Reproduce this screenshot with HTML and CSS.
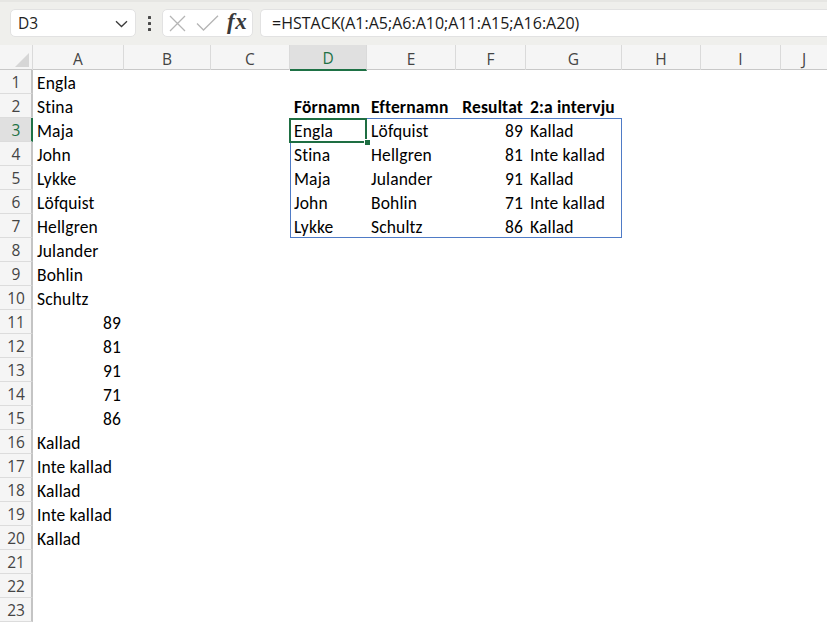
FILE: index.html
```html
<!DOCTYPE html>
<html>
<head>
<meta charset="utf-8">
<link rel="stylesheet" href="styles.css">
</head>
<body>
<div class="app">
  <div class="toolbar">
    <div class="namebox">
      <span class="nb-text">D3</span>
      <svg class="chev" width="13" height="8" viewBox="0 0 13 8"><path d="M1 1.2 L6.5 6.5 L12 1.2" fill="none" stroke="#3a3a3a" stroke-width="1.3"/></svg>
    </div>
    <div class="dots"><span></span><span></span><span></span></div>
    <div class="fxbox">
      <svg class="ic-x" width="17" height="17" viewBox="0 0 17 17"><path d="M1 1 L16 16 M16 1 L1 16" stroke="#b5b5b5" stroke-width="1.3" fill="none"/></svg>
      <svg class="ic-ok" width="23" height="16" viewBox="0 0 23 16"><path d="M1 8.5 L7.5 15 L22 0.8" stroke="#b5b5b5" stroke-width="1.3" fill="none"/></svg>
      <span class="fx">fx</span>
    </div>
    <div class="formula">=HSTACK(A1:A5;A6:A10;A11:A15;A16:A20)</div>
  </div>

  <div class="sheet">
    <div class="row head">
      <div class="corner"><span class="tri"></span></div>
      <div class="ch">A</div><div class="ch">B</div><div class="ch">C</div>
      <div class="ch sel">D</div><div class="ch">E</div><div class="ch">F</div>
      <div class="ch">G</div><div class="ch">H</div><div class="ch">I</div><div class="ch last">J</div>
    </div>
    <div class="row"><div class="rh">1</div><div class="c ca">Engla</div></div>
    <div class="row"><div class="rh">2</div>
      <div class="c cd b">Förnamn</div><div class="c ce b">Efternamn</div><div class="c cf b num">Resultat</div><div class="c cg b">2:a intervju</div>
      <div class="c ca">Stina</div>
    </div>
    <div class="row"><div class="rh rsel">3</div><div class="c ca">Maja</div>
      <div class="c cd active">Engla<span class="spill"></span><span class="handle"></span></div><div class="c ce">Löfquist</div><div class="c cf num">89</div><div class="c cg">Kallad</div>
    </div>
    <div class="row"><div class="rh">4</div><div class="c ca">John</div>
      <div class="c cd">Stina</div><div class="c ce">Hellgren</div><div class="c cf num">81</div><div class="c cg">Inte kallad</div>
    </div>
    <div class="row"><div class="rh">5</div><div class="c ca">Lykke</div>
      <div class="c cd">Maja</div><div class="c ce">Julander</div><div class="c cf num">91</div><div class="c cg">Kallad</div>
    </div>
    <div class="row"><div class="rh">6</div><div class="c ca">Löfquist</div>
      <div class="c cd">John</div><div class="c ce">Bohlin</div><div class="c cf num">71</div><div class="c cg">Inte kallad</div>
    </div>
    <div class="row"><div class="rh">7</div><div class="c ca">Hellgren</div>
      <div class="c cd">Lykke</div><div class="c ce">Schultz</div><div class="c cf num">86</div><div class="c cg">Kallad</div>
    </div>
    <div class="row"><div class="rh">8</div><div class="c ca">Julander</div></div>
    <div class="row"><div class="rh">9</div><div class="c ca">Bohlin</div></div>
    <div class="row"><div class="rh">10</div><div class="c ca">Schultz</div></div>
    <div class="row"><div class="rh">11</div><div class="c ca num">89</div></div>
    <div class="row"><div class="rh">12</div><div class="c ca num">81</div></div>
    <div class="row"><div class="rh">13</div><div class="c ca num">91</div></div>
    <div class="row"><div class="rh">14</div><div class="c ca num">71</div></div>
    <div class="row"><div class="rh">15</div><div class="c ca num">86</div></div>
    <div class="row"><div class="rh">16</div><div class="c ca">Kallad</div></div>
    <div class="row"><div class="rh">17</div><div class="c ca">Inte kallad</div></div>
    <div class="row"><div class="rh">18</div><div class="c ca">Kallad</div></div>
    <div class="row"><div class="rh">19</div><div class="c ca">Inte kallad</div></div>
    <div class="row"><div class="rh">20</div><div class="c ca">Kallad</div></div>
    <div class="row"><div class="rh">21</div></div>
    <div class="row"><div class="rh">22</div></div>
    <div class="row"><div class="rh">23</div></div>
  </div>
</div>
</body>
</html>
```

FILE: styles.css
```css
html, body {
  margin: 0;
  padding: 0;
  background: #ffffff;
  overflow: hidden;
}
.app {
  width: 827px;
  height: 622px;
  overflow: hidden;
  font-family: "Open Sans", "Noto Sans", sans-serif;
}
.toolbar {
  height: 45px;
  box-sizing: border-box;
  background: #efefec;
  border-top: 2px solid #e6e6e3;
  display: flex;
  align-items: flex-start;
  padding: 7px 0 0 10px;
}
.namebox {
  width: 126px;
  height: 28px;
  box-sizing: border-box;
  background: #ffffff;
  border: 1px solid #e2e2e2;
  border-radius: 5px;
  display: flex;
  align-items: center;
  justify-content: space-between;
  padding: 0 7px 0 7px;
  font-size: 15.5px;
  color: #222;
}
.chev { margin-top: 2px; }
.dots {
  width: 26px;
  height: 28px;
  display: flex;
  flex-direction: column;
  align-items: center;
  justify-content: center;
  gap: 3px;
}
.dots span {
  width: 3px;
  height: 3px;
  background: #4a4a4a;
  border-radius: 0.5px;
}
.fxbox {
  width: 91px;
  height: 28px;
  box-sizing: border-box;
  background: #ffffff;
  border: 1px solid #e2e2e2;
  border-radius: 5px;
  display: flex;
  align-items: center;
  padding: 0 0 0 6px;
}
.ic-x { margin-right: 10px; }
.ic-ok { margin-right: 8px; margin-top: -1px; }
.fx {
  font-family: "Liberation Serif", "DejaVu Serif", serif;
  font-style: italic;
  font-weight: bold;
  font-size: 23px;
  color: #3a3a3a;
  letter-spacing: 0.5px;
  margin-top: -3px;
}
.formula {
  margin-left: 7px;
  flex: 1;
  height: 28px;
  box-sizing: border-box;
  background: #ffffff;
  border: 1px solid #e2e2e2;
  border-right: none;
  border-radius: 5px 0 0 5px;
  font-size: 16px;
  color: #1a1a1a;
  display: flex;
  align-items: center;
  padding-left: 11px;
  white-space: nowrap;
}

.sheet {
  position: relative;
}
.row {
  display: grid;
  grid-template-columns: 33px 91px 87px 79px 77px 89px 70px 96px 79px 80px 1fr;
  height: 24px;
}
.row.head {
  height: 25px;
  background: #f5f5f5;
  border-bottom: 1px solid #c8c8c8;
  box-sizing: border-box;
}
.corner {
  position: relative;
  border-right: 1px solid #dadada;
}
.tri {
  position: absolute;
  right: 3px;
  bottom: 3px;
  width: 0;
  height: 0;
  border-left: 14px solid transparent;
  border-bottom: 14px solid #d6d6d6;
}
.ch {
  font-size: 15.5px;
  color: #444;
  display: flex;
  align-items: center;
  justify-content: center;
  border-right: 1px solid #dadada;
  box-sizing: border-box;
  padding-top: 2px;
}
.ch.last { border-right: none; }
.ch.sel {
  background: #e0e0e0;
  color: #1e7145;
  border-bottom: 2px solid #1e7145;
  margin-bottom: -1px;
}
.rh {
  grid-column: 1;
  background: #f5f5f5;
  border-right: 2px solid #c4c4c4;
  border-bottom: 1px solid #dcdcdc;
  box-sizing: border-box;
  font-size: 15.5px;
  color: #444;
  display: flex;
  align-items: center;
  justify-content: center;
  padding-left: 1px;
}
.rh.rsel {
  background: #e0e0e0;
  color: #1e7145;
  border-right: 2px solid #1e7145;
}
.c {
  grid-row: 1;
  font-family: "Carlito", "Lato", sans-serif;
  font-size: 17.5px;
  letter-spacing: 0.15px;
  color: #000;
  display: flex;
  align-items: center;
  padding: 1px 3px 0 4px;
  white-space: nowrap;
  position: relative;
  min-width: 0;
}
.c.num { justify-content: flex-end; }
.c.b { font-weight: bold; }
.ca { grid-column: 2; }
.cd { grid-column: 5; }
.ce { grid-column: 6; }
.cf { grid-column: 7; }
.cg { grid-column: 8; }
.active::before {
  content: "";
  position: absolute;
  left: -1px;
  top: 0;
  right: 0;
  bottom: -1px;
  border: 2px solid #1e6e42;
  z-index: 2;
}
.spill {
  position: absolute;
  left: 0;
  top: 0;
  width: 332px;
  height: 120px;
  box-sizing: border-box;
  border: 1px solid #4f7bc6;
  z-index: 1;
  pointer-events: none;
}
.handle {
  position: absolute;
  right: -4px;
  bottom: -4px;
  width: 5px;
  height: 5px;
  background: #1e6e42;
  border: 1px solid #fff;
  z-index: 3;
}
```
